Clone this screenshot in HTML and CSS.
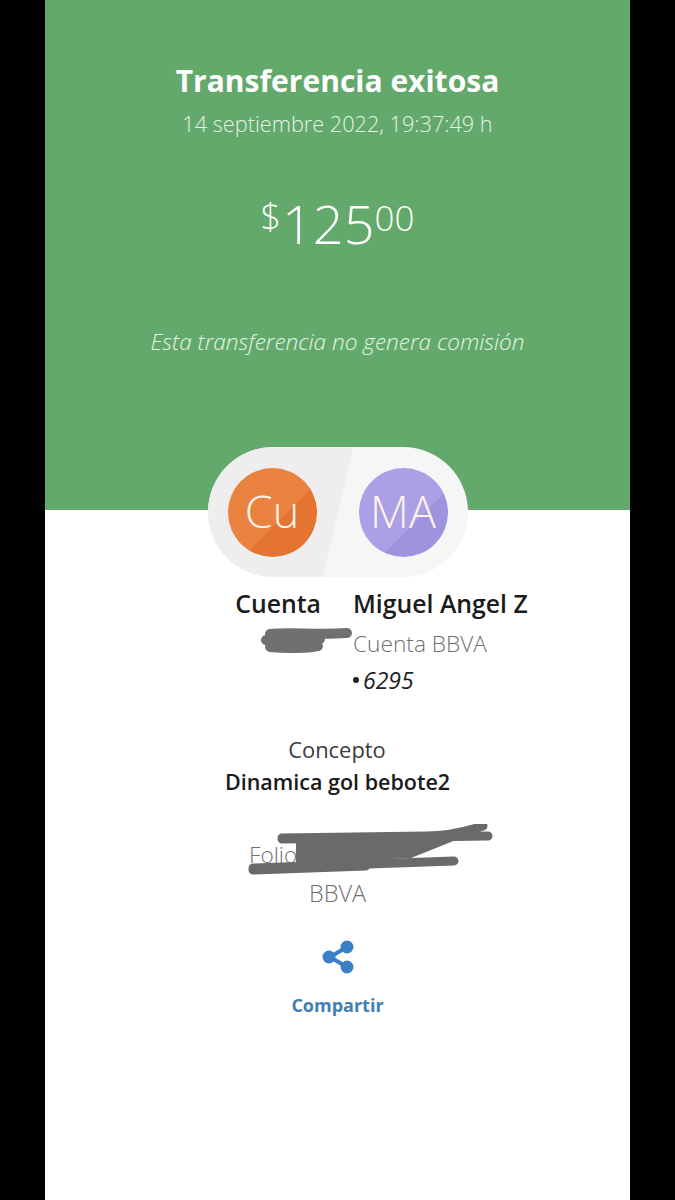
FILE: index.html
```html
<!DOCTYPE html>
<html lang="es">
<head>
<meta charset="utf-8">
<title>Transferencia exitosa</title>
<link rel="stylesheet" href="styles.css">
</head>
<body>
<main class="screen">
  <section class="hero">
    <h1 class="title">Transferencia exitosa</h1>
    <p class="date">14 septiembre 2022, 19:37:49 h</p>
    <p class="amount"><span class="cur">$</span><span class="int">125</span><span class="dec">00</span></p>
    <p class="note">Esta transferencia no genera comisión</p>
  </section>
  <section class="pill">
    <div class="pill-left"></div>
    <div class="avatar orange">Cu</div>
    <div class="avatar purple">MA</div>
  </section>
  <section class="parties">
    <div class="party from">
      <div class="name">Cuenta</div>
      <svg class="scribble-a" width="96" height="30" viewBox="0 0 96 30"><path d="M12 8 C30 6 60 9 89 7 M8 14 C30 13 50 15 62 13 M12 21 C30 23 50 22 60 20" fill="none" stroke="#707070" stroke-width="10" stroke-linecap="round"/></svg>
    </div>
    <div class="party to">
      <div class="name">Miguel Angel Z</div>
      <div class="bank">Cuenta BBVA</div>
      <div class="acct"><span class="dot"></span><i>6295</i></div>
    </div>
  </section>
  <section class="concept">
    <div class="c-label">Concepto</div>
    <div class="c-value">Dinamica gol bebote2</div>
  </section>
  <section class="folio">
    <div class="f-label">Folio</div>
    <div class="f-bank">BBVA</div>
    <svg class="scribble-b" width="250" height="56" viewBox="0 0 250 56"><path d="M36 14 L180 12 C205 12 225 6 237 2 M36 15 L242 12 M7 44 L208 37 M7 46 L120 42" fill="none" stroke="#6a6a6a" stroke-width="9" stroke-linecap="round"/><path d="M50 18 L215 14 L165 34 L50 40 Z" fill="#6a6a6a"/></svg>
  </section>
  <section class="share">
    <svg class="share-icon" width="34" height="36" viewBox="0 0 34 36"><path d="M26 8 L9 18 L26 28" fill="none" stroke="#3a7fc8" stroke-width="4"/><circle cx="26" cy="8" r="6.5" fill="#3a7fc8"/><circle cx="8" cy="18" r="6.5" fill="#3a7fc8"/><circle cx="26" cy="28" r="6.5" fill="#3a7fc8"/></svg>
    <div class="share-label">Compartir</div>
  </section>
</main>
</body>
</html>
```
FILE: styles.css
```css
* { box-sizing: border-box; }
html, body { margin: 0; height: 100%; background: #000; }
body { font-family: "Open Sans", "Noto Sans", sans-serif; overflow: hidden; }
.screen {
  width: 585px;
  height: 1200px;
  margin-left: 45px;
  background: #fff;
  display: flex;
  flex-direction: column;
  align-items: center;
}
.hero {
  width: 100%;
  height: 510px;
  background: #63a96b;
  color: #fff;
  display: flex;
  flex-direction: column;
  align-items: center;
  padding-top: 62px;
  flex: none;
}
.title { margin: 0; font-size: 30px; line-height: 38px; font-weight: 700; white-space: nowrap; }
.date { margin: 11px 0 0; font-size: 21.7px; line-height: 26px; font-weight: 300; color: #e6f3e6; white-space: nowrap; }
.amount { margin: 50px 0 0; height: 72px; display: flex; align-items: flex-start; font-weight: 300; }
.cur { font-size: 36px; line-height: 40px; margin-top: 10px; margin-right: 1px; }
.int { font-size: 54px; line-height: 72px; }
.dec { font-size: 35px; line-height: 40px; margin-top: 11px; }
.note { margin: 69px 0 0; font-size: 22.6px; line-height: 28px; font-style: italic; font-weight: 300; color: #e6f3e6; white-space: nowrap; }
.pill {
  position: relative;
  width: 260px;
  height: 130px;
  margin-top: -63px;
  border-radius: 65px;
  background: #f6f6f6;
  display: flex;
  align-items: center;
  gap: 42px;
  padding-left: 20px;
  overflow: hidden;
  flex: none;
}
.pill-left {
  position: absolute;
  left: 0;
  top: 0;
  width: 146px;
  height: 130px;
  background: #eeeeee;
  clip-path: polygon(0 0, 100% 0, 79% 100%, 0 100%);
}
.avatar {
  position: relative;
  width: 89px;
  height: 89px;
  padding-bottom: 4px;
  border-radius: 50%;
  display: flex;
  align-items: center;
  justify-content: center;
  color: #fdf3e8;
  font-size: 45px;
  font-weight: 300;
  flex: none;
}
.orange { background: linear-gradient(135deg, #ea8240 0 58%, #e4742f 58% 100%); }
.purple { background: linear-gradient(135deg, #ab9fe6 0 62%, #9f93e0 62% 100%); }
.parties { width: 100%; display: flex; margin-top: 10px; height: 147px; flex: none; }
.party { display: flex; flex-direction: column; }
.from { width: 308px; align-items: flex-end; padding-right: 32px; position: relative; }
.name { font-size: 24.8px; line-height: 32px; font-weight: 600; color: #1a1a1a; white-space: nowrap; }
.scribble-a { position: absolute; left: 213px; top: 39px; }
.bank { font-size: 22.7px; line-height: 28px; font-weight: 300; color: #6f6f72; margin-top: 11px; }
.acct { font-size: 23px; line-height: 28px; color: #222; margin-top: 8px; display: flex; align-items: center; gap: 4px; }
.dot { width: 6px; height: 6px; border-radius: 50%; background: #222; }
.concept { display: flex; flex-direction: column; align-items: center; margin-top: 2px; flex: none; }
.c-label { font-size: 21.9px; line-height: 28px; color: #3a3a3a; font-weight: 400; margin-left: -1px; }
.c-value { font-size: 21.5px; line-height: 30px; color: #1a1a1a; font-weight: 600; margin-top: 3px; }
.folio { position: relative; width: 100%; height: 98px; margin-top: 31px; flex: none; display: flex; flex-direction: column; align-items: center; }
.f-label { font-size: 22.7px; line-height: 28px; font-weight: 300; color: #6f6f72; align-self: flex-start; margin-left: 204px; margin-top: 13px; }
.f-bank { font-size: 23.5px; line-height: 28px; font-weight: 300; color: #6f6f72; margin-top: 10px; }
.scribble-b { position: absolute; left: 201px; top: -4px; }
.share { display: flex; flex-direction: column; align-items: center; margin-top: 13px; flex: none; }
.share-icon { display: block; }
.share-label { font-size: 18px; line-height: 26px; font-weight: 700; color: #3f7fb5; margin-top: 17px; }
```
